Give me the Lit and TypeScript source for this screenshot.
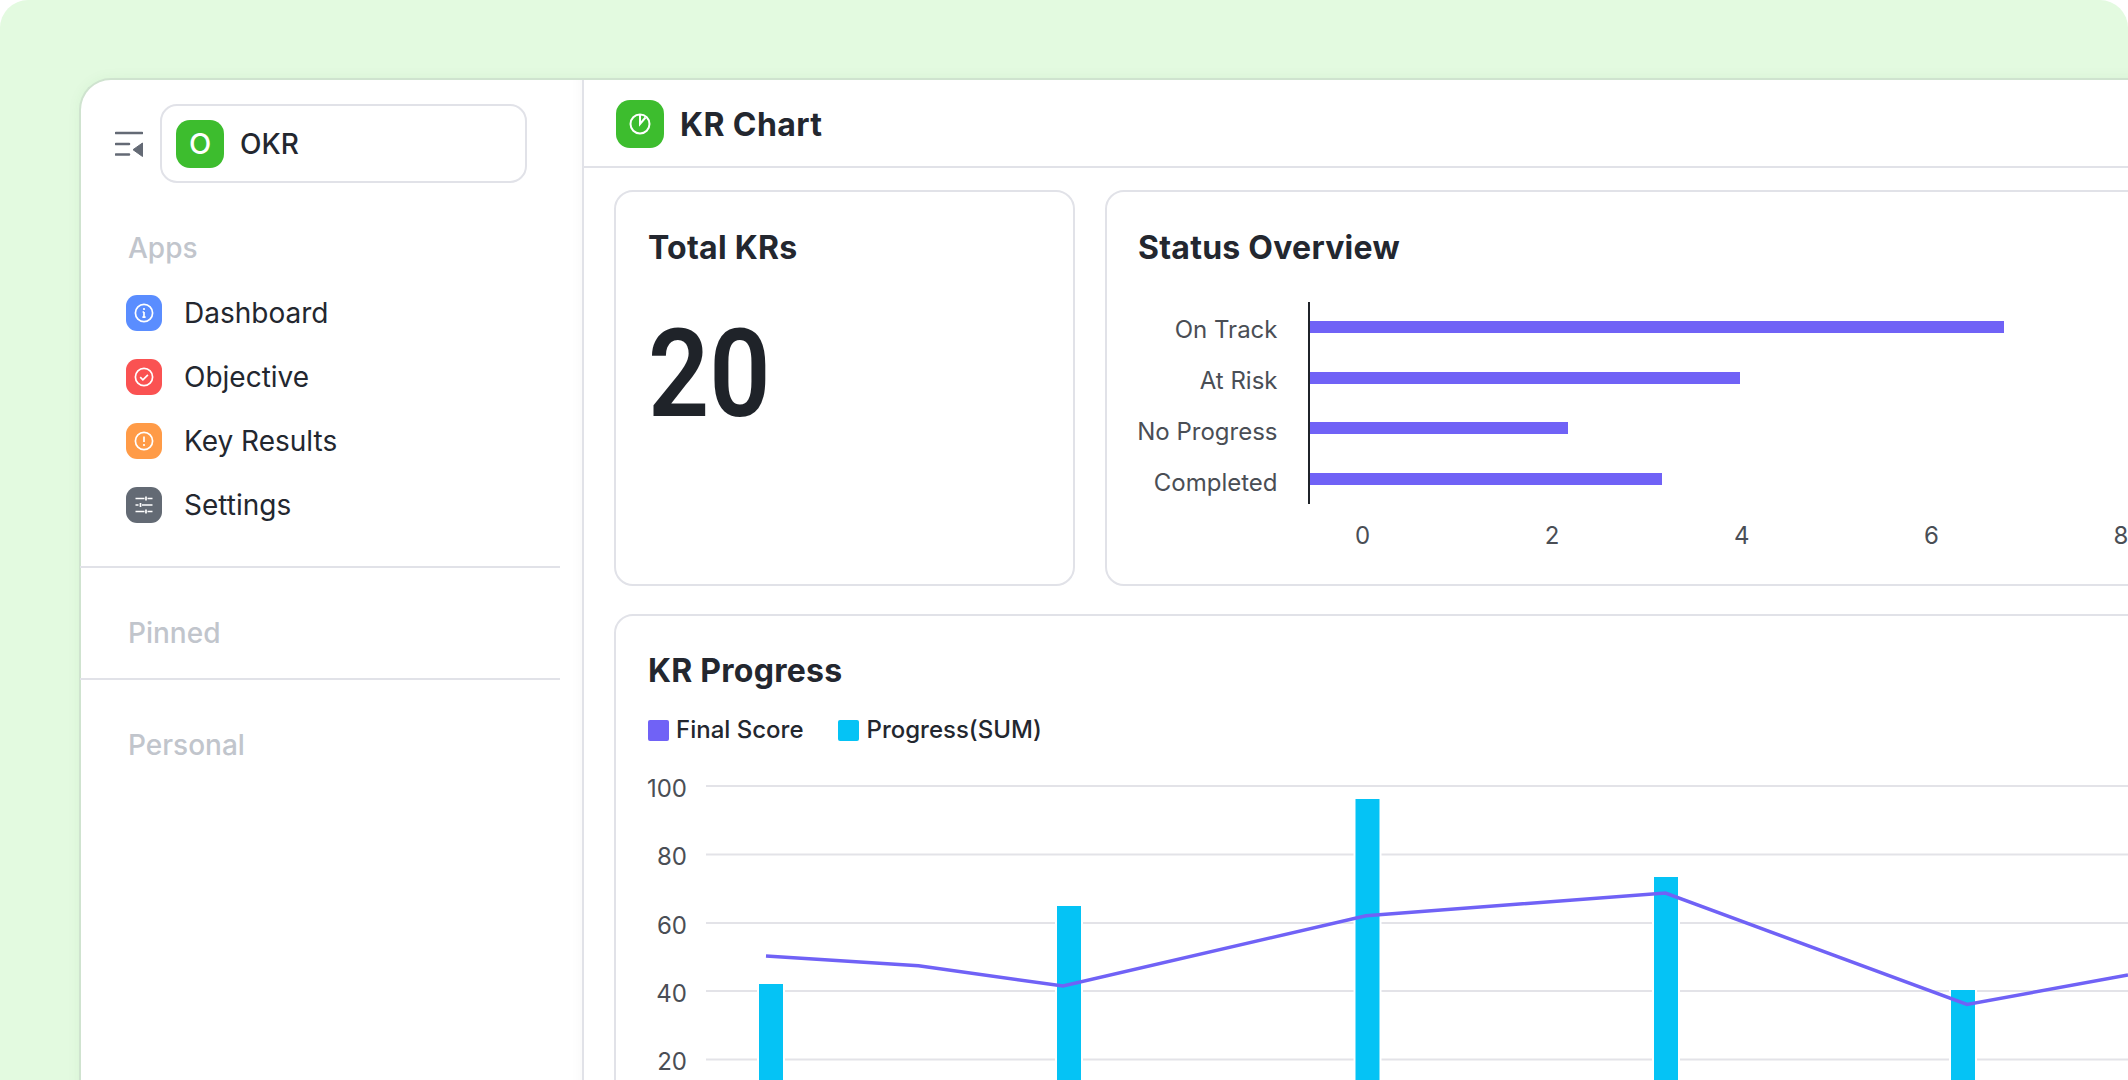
import { LitElement, html, css, svg, unsafeCSS } from "lit";
import { customElement } from "lit/decorators.js";

const FONT = `Inter, "Noto Sans", sans-serif`;
const PURPLE = "#7062f6";
const CYAN = "#05c3f5";
const GRID = "#e3e3e8";

const NAV = [
  {
    label: "Dashboard",
    cls: "blue",
    glyph: svg`<circle cx="12" cy="12" r="8.6"/><path d="M12 11v5.2M10.4 16.2h3.2M10.6 11h1.4"/><circle class="dot" cx="12" cy="8" r="1.1"/>`,
  },
  {
    label: "Objective",
    cls: "red",
    glyph: svg`<circle cx="12" cy="12" r="8.6"/><path d="M8.2 12.2l2.7 2.6 5-5"/>`,
  },
  {
    label: "Key Results",
    cls: "orange",
    glyph: svg`<circle cx="12" cy="12" r="8.6"/><path d="M12 7.4v5.6"/><circle class="dot" cx="12" cy="16" r="1.1"/>`,
  },
  {
    label: "Settings",
    cls: "gray",
    glyph: svg`<path d="M3.5 5.5h9M15.5 5.5h5M14 3.5v4M3.5 12h3M10 12h10.5M8.5 10v4M3.5 18.5h9M15.5 18.5h5M14 16.5v4"/>`,
  },
];

const STATUS = [
  { label: "On Track", y: 321, end: 2004, textY: 329 },
  { label: "At Risk", y: 372, end: 1740, textY: 380 },
  { label: "No Progress", y: 422, end: 1568, textY: 431 },
  { label: "Completed", y: 473, end: 1662, textY: 482 },
];
const STATUS_TICKS = [
  { label: "0", x: 1362.5 },
  { label: "2", x: 1552 },
  { label: "4", x: 1741.7 },
  { label: "6", x: 1931.5 },
  { label: "8", x: 2121 },
];

const PROGRESS_GRID = [
  { label: "100", y: 786 },
  { label: "80", y: 854.5 },
  { label: "60", y: 923 },
  { label: "40", y: 991 },
  { label: "20", y: 1059.5 },
];
const PROGRESS_BARS = [
  { x: 759, top: 984 },
  { x: 1057, top: 906 },
  { x: 1355.5, top: 799 },
  { x: 1654, top: 877 },
  { x: 1951, top: 990 },
];
const PROGRESS_LINE = "766,956 918.5,965.7 1063,986 1366,915.7 1665.5,893 1967,1004.5 2128,975";

@customElement("app-root")
export class AppRoot extends LitElement {
  static styles = css`
    :host {
      display: block;
      width: 2128px;
      height: 1080px;
      overflow: hidden;
      background: #fff;
      font-family: ${unsafeCSS(FONT)};
      color: #23272f;
    }
    * { box-sizing: border-box; }
    .stage {
      width: 2128px;
      height: 1080px;
      overflow: hidden;
      background: #e3fae0;
      border-radius: 28px 28px 0 0;
      padding: 78px 0 0 79px;
    }
    .window {
      width: 2200px;
      height: 1100px;
      display: flex;
      background: #fff;
      border: 2px solid #cfe3cf;
      border-right: 0;
      border-bottom: 0;
      border-radius: 32px 0 0 0;
      box-shadow: 0 0 14px rgba(40, 110, 40, 0.05);
    }
    .sidebar {
      flex: 0 0 503px;
      border-right: 2px solid #e1e2e8;
      box-shadow: inset -14px 0 14px -14px rgba(0, 0, 0, 0.04);
      display: flex;
      flex-direction: column;
    }
    .top {
      display: flex;
      align-items: center;
      gap: 17px;
      padding: 24px 0 0 34px;
    }
    .menu { width: 28px; height: 26px; flex: none; }
    .select {
      width: 367px;
      height: 79px;
      border: 2px solid #e1e2e8;
      border-radius: 17px;
      display: flex;
      align-items: center;
      gap: 16px;
      padding-left: 14px;
    }
    .logo {
      width: 48px;
      height: 48px;
      border-radius: 14px;
      background: #3dbd2e;
      display: flex;
      align-items: center;
      justify-content: center;
      flex: none;
    }
    .logo.letter { color: #fff; font-size: 29px; font-weight: 500; line-height: 1; }
    .okr { font-size: 28px; font-weight: 500; line-height: 1; }
    .section {
      font-size: 28px;
      line-height: 34px;
      font-weight: 500;
      color: #c1c5cc;
      padding-left: 47px;
    }
    .apps { margin-top: 48px; }
    .nav {
      display: flex;
      flex-direction: column;
      gap: 28px;
      margin: 30px 0 0 45px;
    }
    .item { display: flex; align-items: center; gap: 22px; height: 36px; }
    .tile {
      width: 36px;
      height: 36px;
      border-radius: 11px;
      display: flex;
      align-items: center;
      justify-content: center;
      flex: none;
    }
    .tile svg { width: 24px; height: 24px; fill: none; stroke: #fff; stroke-width: 1.7; }
    .tile .dot { fill: #fff; stroke: none; }
    .blue { background: #5a8dff; }
    .red { background: #fa5252; }
    .orange { background: #ff9b47; }
    .gray { background: #636a74; }
    .label { font-size: 28px; line-height: 36px; color: #23272f; }
    .rule { height: 2px; width: 480px; margin-left: -1px; background: #e1e2e8; }
    .rule.first { margin-top: 43px; }
    .pinned { margin-top: 48px; }
    .rule.second { margin-top: 28px; }
    .personal { margin-top: 48px; }
    .main { flex: 1; min-width: 0; display: flex; flex-direction: column; }
    .header {
      height: 88px;
      flex: none;
      display: flex;
      align-items: center;
      gap: 16px;
      padding: 2px 0 0 32px;
      border-bottom: 2px solid #e1e2e8;
    }
    .header .logo svg { width: 28px; height: 28px; fill: none; stroke: #fff; stroke-width: 2; }
    .title { font-size: 32px; font-weight: 700; line-height: 1; letter-spacing: 0.4px; margin-top: 2px; }
    .cards {
      display: grid;
      grid-template-columns: 461px 1fr;
      grid-template-rows: 396px 1fr;
      column-gap: 30px;
      row-gap: 28px;
      padding: 22px 0 0 30px;
      flex: 1;
    }
    .card {
      border: 2px solid #e1e2e8;
      border-radius: 19px;
      background: #fff;
      padding: 36px 0 0 32px;
      position: relative;
      overflow: hidden;
      min-width: 0;
    }
    .card.second { padding-left: 31px; }
    .wide { grid-column: 1 / 3; padding-top: 35px; }
    h2 { margin: 0; font-size: 32px; line-height: 40px; font-weight: 700; letter-spacing: 0.25px; }
    .big {
      display: inline-block;
      margin-top: 32px;
      font-size: 122px;
      line-height: 150px;
      font-weight: 600;
      font-family: Roboto, sans-serif;
      transform: scaleX(0.88);
      transform-origin: left center;
      color: #1f2329;
    }
    .legend { display: flex; gap: 35px; margin-top: 24px; }
    .key { display: flex; align-items: center; gap: 7px; font-size: 24px; font-weight: 500; line-height: 30px; }
    .swatch { width: 21px; height: 21px; border-radius: 2px; }
    .plot { position: absolute; display: block; overflow: visible; left: -2px; top: -2px; }
    .plot text { font-family: ${unsafeCSS(FONT)}; font-size: 24px; fill: #4a4e55; }
  `;

  private menuIcon() {
    return html`<svg class="menu" viewBox="0 0 28 26" aria-hidden="true">
      <path d="M1 2h26M1 13h13M1 23.5h13" stroke="#646a75" stroke-width="2.6" stroke-linecap="round" fill="none"/>
      <path d="M27.5 12v13.5L18 18.7z" fill="#646a75" stroke="#646a75" stroke-linejoin="round"/>
    </svg>`;
  }

  private statusChart() {
    return html`<svg class="plot" width="1030" height="395" viewBox="1105 190 1030 395" aria-hidden="true">
      ${STATUS.map(
        (s) => svg`
          <text x="1277.5" y=${s.textY + 8.5} text-anchor="end">${s.label}</text>
          <rect x="1310" y=${s.y} width=${s.end - 1310} height="12" fill=${PURPLE}/>`
      )}
      <rect x="1308" y="302" width="2" height="202" fill="#1f2329"/>
      ${STATUS_TICKS.map(
        (t) => svg`<text x=${t.x} y="544" text-anchor="middle">${t.label}</text>`
      )}
    </svg>`;
  }

  private progressChart() {
    return html`<svg class="plot" width="1600" height="520" viewBox="614 614 1600 520" aria-hidden="true">
      ${PROGRESS_GRID.map(
        (g) => svg`
          <text x="687" y=${g.y + 10.5} text-anchor="end">${g.label}</text>
          <rect x="706" y=${g.y - 1} width="1500" height="2" fill=${GRID}/>`
      )}
      ${PROGRESS_BARS.map(
        (b) => svg`
          <rect x=${b.x - 2} y=${b.top} width="28" height=${1100 - b.top} fill="#fff"/>
          <rect x=${b.x} y=${b.top} width="24" height=${1100 - b.top} fill=${CYAN}/>`
      )}
      <polyline points=${PROGRESS_LINE} fill="none" stroke=${PURPLE} stroke-width="3.5"/>
    </svg>`;
  }

  render() {
    return html`<div class="stage">
      <div class="window">
        <aside class="sidebar">
          <div class="top">
            ${this.menuIcon()}
            <div class="select">
              <div class="logo letter">O</div>
              <span class="okr">OKR</span>
            </div>
          </div>
          <div class="section apps">Apps</div>
          <div class="nav">
            ${NAV.map(
              (n) => html`<div class="item">
                <div class="tile ${n.cls}"><svg viewBox="0 0 24 24" aria-hidden="true">${n.glyph}</svg></div>
                <span class="label">${n.label}</span>
              </div>`
            )}
          </div>
          <div class="rule first"></div>
          <div class="section pinned">Pinned</div>
          <div class="rule second"></div>
          <div class="section personal">Personal</div>
        </aside>
        <main class="main">
          <header class="header">
            <div class="logo">
              <svg viewBox="0 0 28 28" aria-hidden="true">
                <circle cx="14" cy="14" r="9.5"/>
                <path d="M14 4.5V14l5.5-6.5"/>
              </svg>
            </div>
            <span class="title">KR Chart</span>
          </header>
          <div class="cards">
            <section class="card">
              <h2>Total KRs</h2>
              <div class="big">20</div>
            </section>
            <section class="card second">
              <h2>Status Overview</h2>
              ${this.statusChart()}
            </section>
            <section class="card wide">
              <h2>KR Progress</h2>
              <div class="legend">
                <div class="key"><span class="swatch" style="background:${PURPLE}"></span>Final Score</div>
                <div class="key"><span class="swatch" style="background:${CYAN}"></span>Progress(SUM)</div>
              </div>
              ${this.progressChart()}
            </section>
          </div>
        </main>
      </div>
    </div>`;
  }
}
